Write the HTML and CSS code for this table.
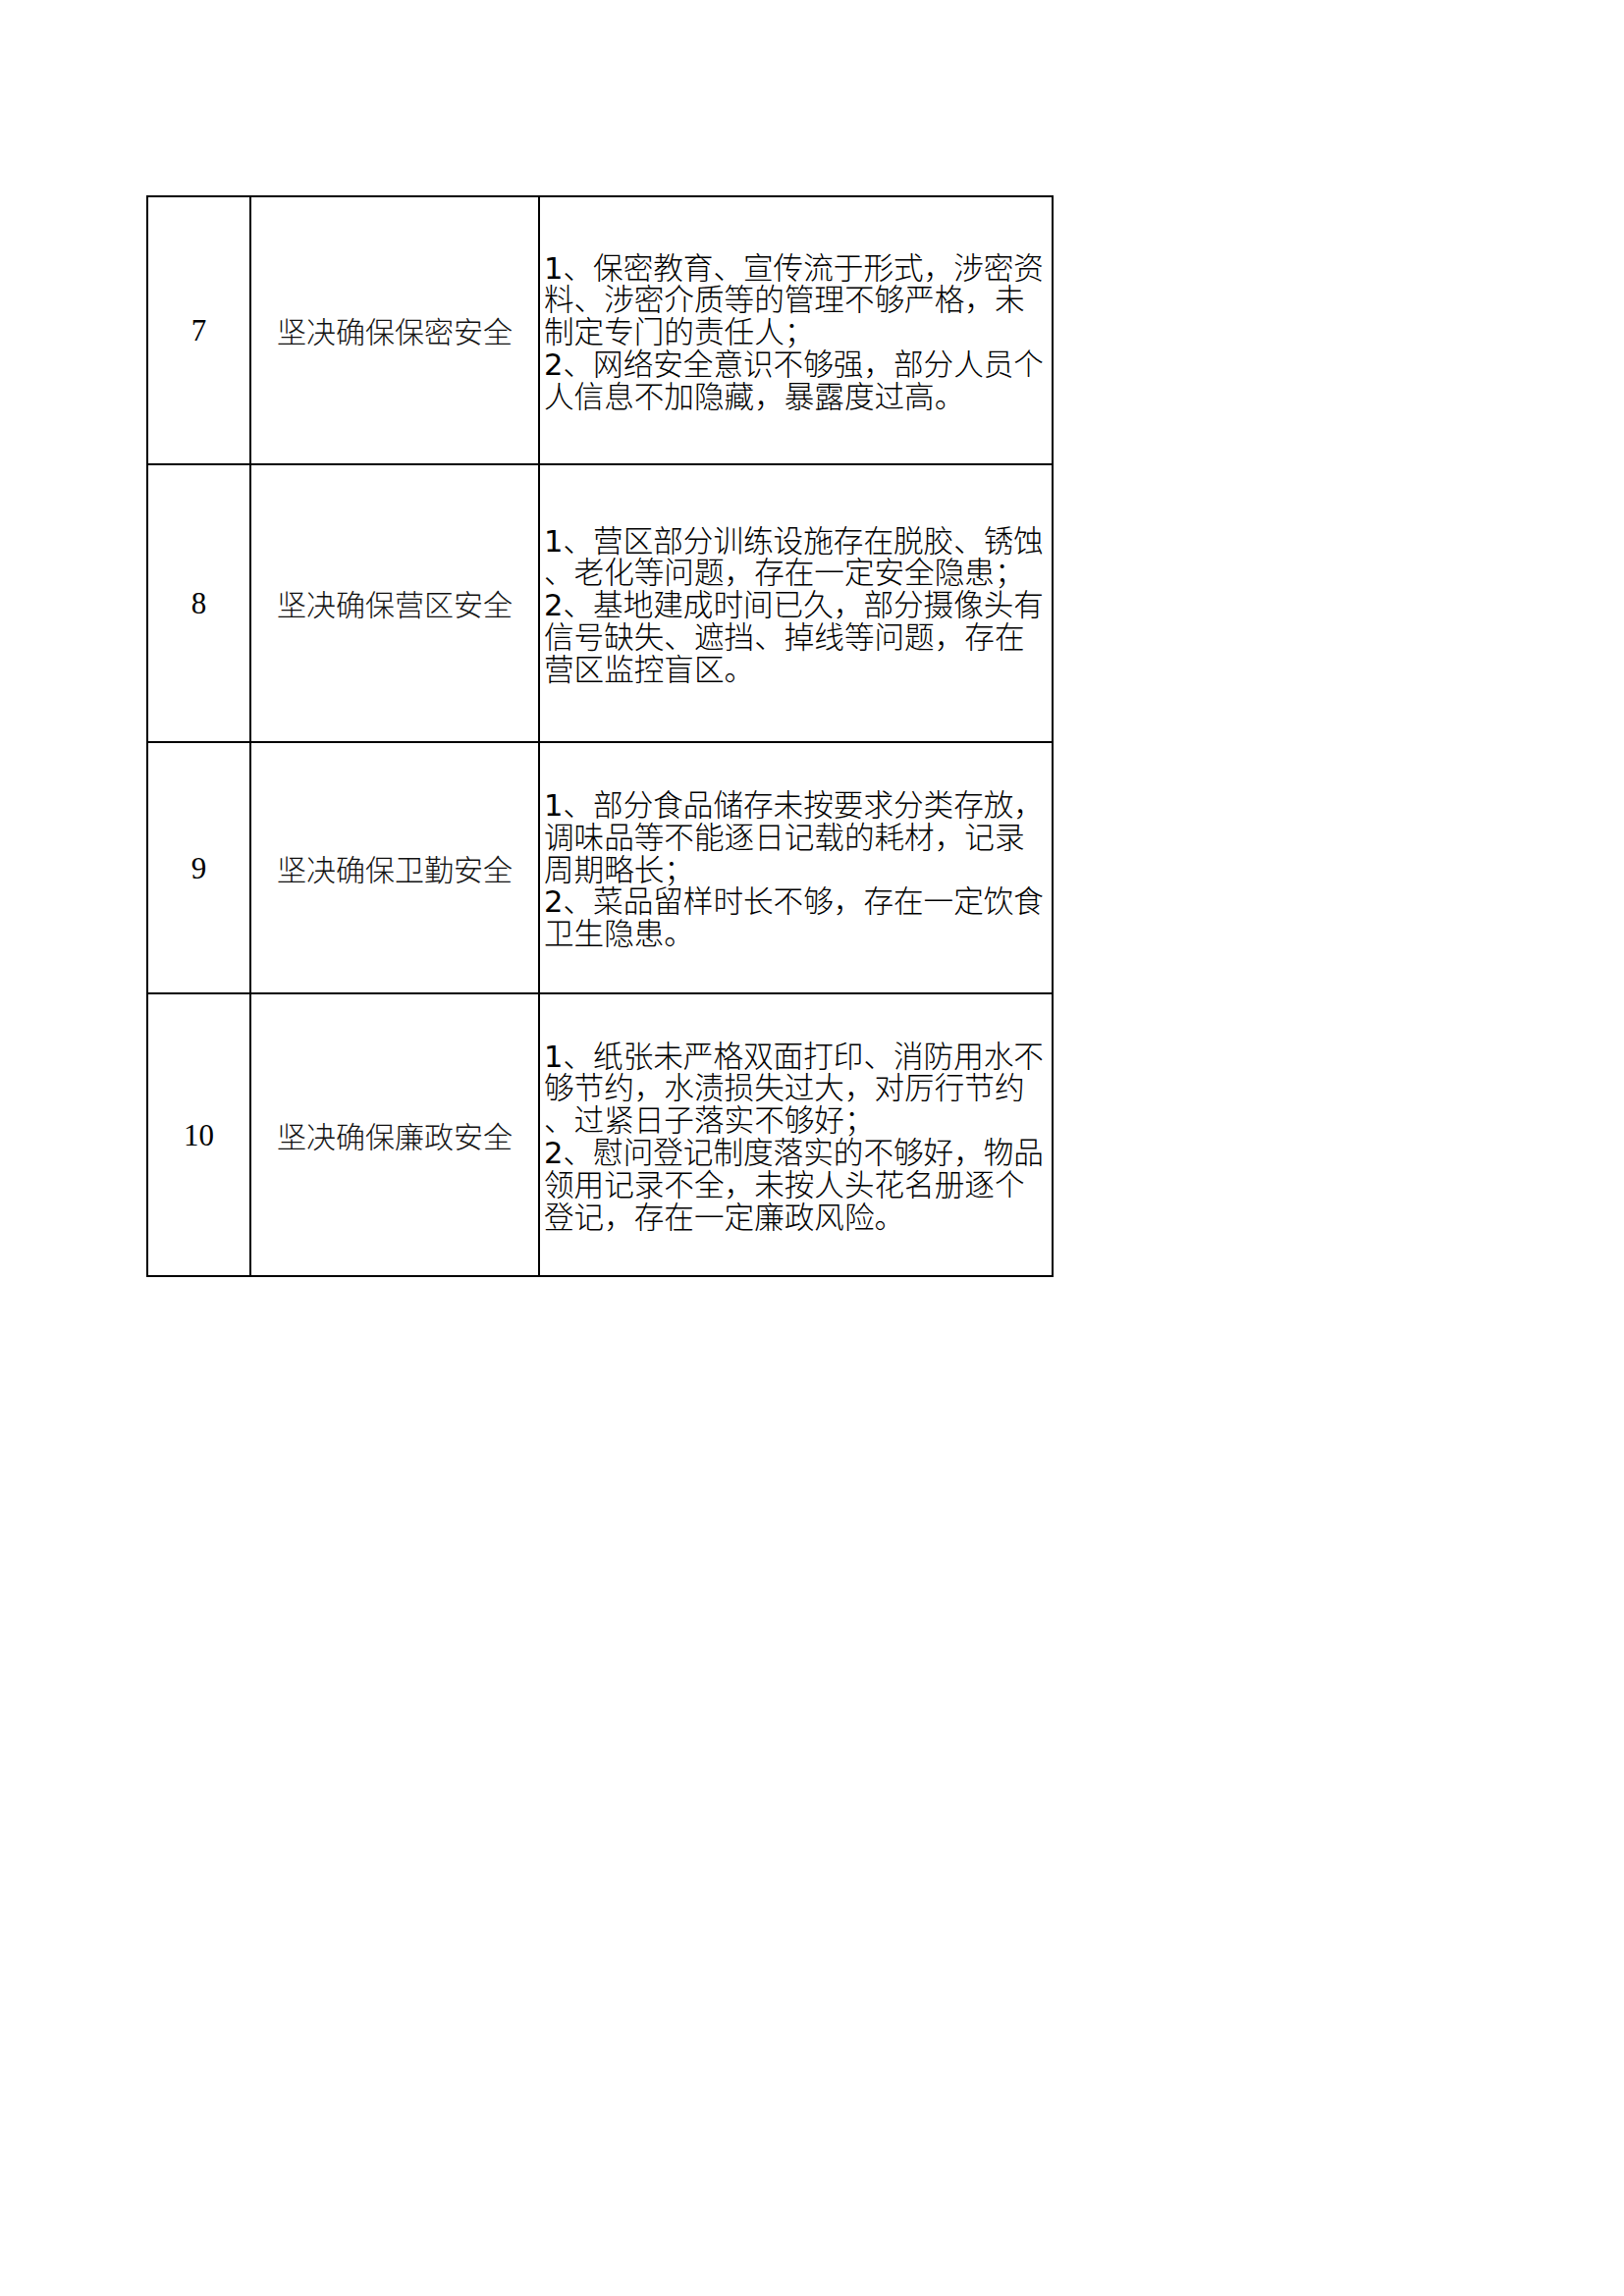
FILE: index.html
```html
<!DOCTYPE html>
<html lang="zh-CN">
<head>
<meta charset="utf-8">
<title>安全问题清单</title>
<link rel="stylesheet" href="styles.css">
</head>
<body>
<div class="sheet">
  <div class="cell num">7</div>
  <div class="cell item">坚决确保保密安全</div>
  <div class="cell desc"><p><span class="n">1</span>、保密教育、宣传流于形式，涉密资<br>料、涉密介质等的管理不够严格，未<br>制定专门的责任人；<br><span class="n">2</span>、网络安全意识不够强，部分人员个<br>人信息不加隐藏，暴露度过高。</p></div>

  <div class="cell num">8</div>
  <div class="cell item">坚决确保营区安全</div>
  <div class="cell desc"><p><span class="n">1</span>、营区部分训练设施存在脱胶、锈蚀<br>、老化等问题，存在一定安全隐患；<br><span class="n">2</span>、基地建成时间已久，部分摄像头有<br>信号缺失、遮挡、掉线等问题，存在<br>营区监控盲区。</p></div>

  <div class="cell num">9</div>
  <div class="cell item">坚决确保卫勤安全</div>
  <div class="cell desc"><p><span class="n">1</span>、部分食品储存未按要求分类存放，<br>调味品等不能逐日记载的耗材，记录<br>周期略长；<br><span class="n">2</span>、菜品留样时长不够，存在一定饮食<br>卫生隐患。</p></div>

  <div class="cell num">10</div>
  <div class="cell item">坚决确保廉政安全</div>
  <div class="cell desc"><p><span class="n">1</span>、纸张未严格双面打印、消防用水不<br>够节约，水渍损失过大，对厉行节约<br>、过紧日子落实不够好；<br><span class="n">2</span>、慰问登记制度落实的不够好，物品<br>领用记录不全，未按人头花名册逐个<br>登记，存在一定廉政风险。</p></div>
</div>
</body>
</html>
```

FILE: styles.css
```css
html, body {
  margin: 0;
  padding: 0;
  background: #fff;
  color: #000;
}

.sheet {
  display: grid;
  grid-template-columns: 105px 294px 523px;
  grid-template-rows: 273px 283px 256px 288px;
  width: max-content;
  margin: 199px 0 0 149px;
  border-left: 2px solid #000;
  border-top: 2px solid #000;
}

.cell {
  box-sizing: border-box;
  border-right: 2px solid #000;
  border-bottom: 2px solid #000;
  display: flex;
  align-items: center;
  overflow: hidden;
}

.num {
  justify-content: center;
  font-family: "Liberation Serif", "Times New Roman", serif;
  font-size: 31px;
  line-height: 1;
}

.item {
  justify-content: center;
  font-family: "Noto Sans CJK SC", sans-serif;
  font-weight: 300;
  font-size: 30px;
  line-height: 1.1;
  color: #111;
}

.desc {
  padding-left: 4px;
  padding-top: 6px;
  font-family: "DejaVu Sans", "Noto Sans CJK SC", sans-serif;
  font-weight: 300;
  font-size: 30.6px;
  line-height: 32.8px;
  white-space: nowrap;
}

.desc p {
  margin: 0;
}

.desc .n {
  font-weight: 400;
}
```
